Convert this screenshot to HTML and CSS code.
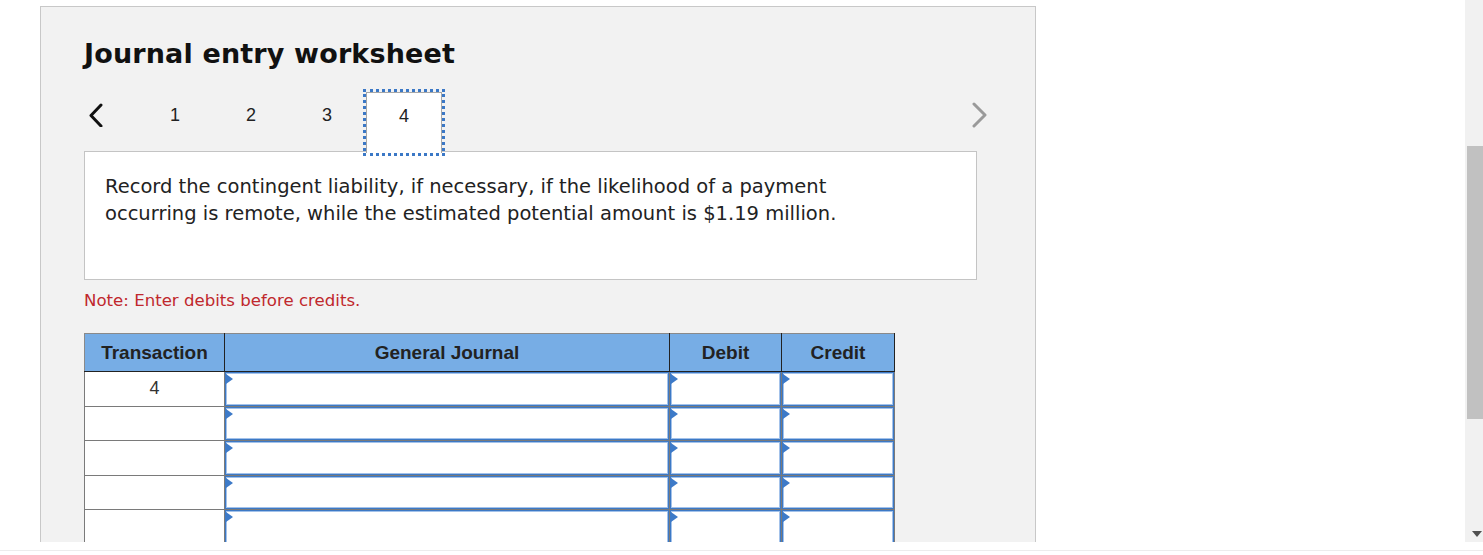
FILE: index.html
```html
<!DOCTYPE html>
<html lang="en">
<head>
<meta charset="utf-8">
<title>Journal entry worksheet</title>
<link rel="stylesheet" href="styles.css">
</head>
<body>
<div class="screen">
  <div class="window">
    <div class="viewport">
      <div class="panel">
        <h1 class="title">Journal entry worksheet</h1>
        <div class="nav">
          <div class="nav-prev">
            <svg width="20" height="24" viewBox="0 0 20 24"><polyline points="14,2 4,12.5 14,23" fill="none" stroke="#111" stroke-width="3" stroke-linecap="round" stroke-linejoin="round"/></svg>
          </div>
          <div class="tabs">
            <div class="tab">1</div>
            <div class="tab">2</div>
            <div class="tab">3</div>
            <div class="tab tab-active">4</div>
          </div>
          <div class="nav-next">
            <svg width="20" height="26" viewBox="0 0 20 26"><polyline points="5,2 16,13 5,24" fill="none" stroke="#9a9a9a" stroke-width="3" stroke-linecap="round" stroke-linejoin="round"/></svg>
          </div>
        </div>
        <div class="desc">
          <p>Record the contingent liability, if necessary, if the likelihood of a payment occurring is remote, while the estimated potential amount is $1.19 million.</p>
        </div>
        <p class="note">Note: Enter debits before credits.</p>
        <table class="journal">
          <colgroup>
            <col class="c-tr"><col class="c-gj"><col class="c-dr"><col class="c-cr">
          </colgroup>
          <thead>
            <tr><th>Transaction</th><th>General Journal</th><th>Debit</th><th>Credit</th></tr>
          </thead>
          <tbody>
            <tr><td class="tr">4</td><td><div class="field"><input type="text"></div></td><td><div class="field"><input type="text"></div></td><td><div class="field"><input type="text"></div></td></tr>
            <tr><td class="tr"></td><td><div class="field"><input type="text"></div></td><td><div class="field"><input type="text"></div></td><td><div class="field"><input type="text"></div></td></tr>
            <tr><td class="tr"></td><td><div class="field"><input type="text"></div></td><td><div class="field"><input type="text"></div></td><td><div class="field"><input type="text"></div></td></tr>
            <tr><td class="tr"></td><td><div class="field"><input type="text"></div></td><td><div class="field"><input type="text"></div></td><td><div class="field"><input type="text"></div></td></tr>
            <tr><td class="tr"></td><td><div class="field"><input type="text"></div></td><td><div class="field"><input type="text"></div></td><td><div class="field"><input type="text"></div></td></tr>
          </tbody>
        </table>
      </div>
    </div>
    <div class="vscroll">
      <div class="vs-track">
        <div class="vs-thumb"></div>
      </div>
      <div class="vs-down"></div>
    </div>
  </div>
  <div class="bottom-strip"><div class="bottom-line"></div></div>
</div>
</body>
</html>
```

FILE: styles.css
```css
html, body {
  margin: 0;
  padding: 0;
  background: #fff;
}
.screen {
  width: 1483px;
  height: 555px;
  display: flex;
  flex-direction: column;
  overflow: hidden;
}
.window {
  display: flex;
  height: 542px;
  flex: none;
}
.viewport {
  flex: 1;
  overflow: hidden;
  padding: 6px 0 0 40px;
}
.panel {
  width: 996px;
  height: 600px;
  box-sizing: border-box;
  background: #f2f2f2;
  border: 1px solid #c8c8c8;
  border-bottom: none;
  padding: 31px 40px 0 43px;
}
.title {
  margin: 0;
  font-family: "DejaVu Sans", Verdana, sans-serif;
  font-weight: bold;
  font-size: 27px;
  line-height: 32px;
  color: #111;
  letter-spacing: 0.15px;
}
.nav {
  display: flex;
  align-items: stretch;
  height: 61px;
  margin-top: 22px;
  margin-bottom: -2px;
}
.nav-prev {
  width: 53px;
  display: flex;
  align-items: center;
  padding-left: 3px;
  padding-bottom: 15px;
  box-sizing: border-box;
}
.nav-prev svg { display: block; }
.tabs {
  display: flex;
}
.tab {
  width: 76px;
  display: flex;
  align-items: center;
  justify-content: center;
  font-family: "Liberation Sans", Arial, sans-serif;
  font-size: 18px;
  line-height: 21px;
  color: #222;
  box-sizing: border-box;
  padding-bottom: 15px;
}
.tab-active {
  position: relative;
  z-index: 2;
  margin-left: 1px;
  background: #fff;
  border: 1px solid #a8a8a8;
  border-bottom: none;
  outline: 3px dotted #3b78c6;
  outline-offset: 0px;
  padding-bottom: 14px;
}
.nav-next {
  margin-left: auto;
  margin-right: 6px;
  display: flex;
  align-items: center;
  padding-bottom: 15px;
}
.nav-next svg { display: block; }
.desc {
  position: relative;
  z-index: 1;
  width: 893px;
  height: 129px;
  box-sizing: border-box;
  background: #fff;
  border: 1px solid #c4c4c4;
  padding: 21px 20px 0 20px;
}
.desc p {
  margin: 0;
  font-family: "DejaVu Sans", Verdana, sans-serif;
  font-size: 19.5px;
  line-height: 27px;
  color: #222;
  max-width: 745px;
}
.note {
  margin: 12px 0 0 0;
  font-family: "DejaVu Sans", Verdana, sans-serif;
  font-size: 16.6px;
  line-height: 18px;
  color: #c0282d;
}
.journal {
  margin-top: 23px;
  border-collapse: collapse;
  table-layout: fixed;
  width: 811px;
  font-family: "Liberation Sans", Arial, sans-serif;
}
.c-tr { width: 140px; }
.c-gj { width: 445px; }
.c-dr { width: 112px; }
.c-cr { width: 113px; }
.journal th {
  background: #77ade5;
  color: #222;
  font-weight: bold;
  font-size: 19px;
  height: 37px;
  padding: 0;
  border: 1px solid #222;
  border-top: 1px solid #8a8a8a;
}
.journal th:first-child {
  border-left: 1px solid #8a8a8a;
}
.journal td {
  height: 33.5px;
  padding: 0;
  border: 1px solid #7a7a7a;
  background: #fff;
}
.journal td.tr {
  text-align: center;
  font-size: 18px;
  color: #333;
  vertical-align: top;
  padding-top: 6px;
  box-sizing: border-box;
}
.field {
  position: relative;
  height: 33.5px;
}
.field::before {
  content: "";
  position: absolute;
  left: 1px;
  top: 2px;
  width: 0;
  height: 0;
  border-left: 7px solid #3d7ac8;
  border-top: 5px solid transparent;
  border-bottom: 5px solid transparent;
}
.field input {
  display: block;
  width: 100%;
  height: 100%;
  box-sizing: border-box;
  margin: 0;
  padding: 0 6px;
  border: 1px solid #3d79c5;
  box-shadow: inset 0 0 0 1px #a3c2ea;
  background: #fff;
  outline: none;
  font-family: "Liberation Sans", Arial, sans-serif;
  font-size: 16px;
}
.vscroll {
  width: 18px;
  flex: none;
  background: #f1f1f1;
  display: flex;
  flex-direction: column;
}
.vs-track {
  flex: 1;
  padding-top: 146px;
}
.vs-thumb {
  margin-left: 2px;
  width: 16px;
  height: 273px;
  background: #c1c1c1;
}
.vs-down {
  height: 17px;
  display: flex;
  justify-content: center;
  align-items: center;
  padding-left: 6px;
}
.vs-down::before {
  content: "";
  width: 0;
  height: 0;
  border-left: 5px solid transparent;
  border-right: 5px solid transparent;
  border-top: 6px solid #505050;
}
.bottom-strip {
  flex: 1;
  background: #fff;
}
.bottom-line {
  margin-top: 8px;
  height: 1px;
  background: #ececec;
}
```
